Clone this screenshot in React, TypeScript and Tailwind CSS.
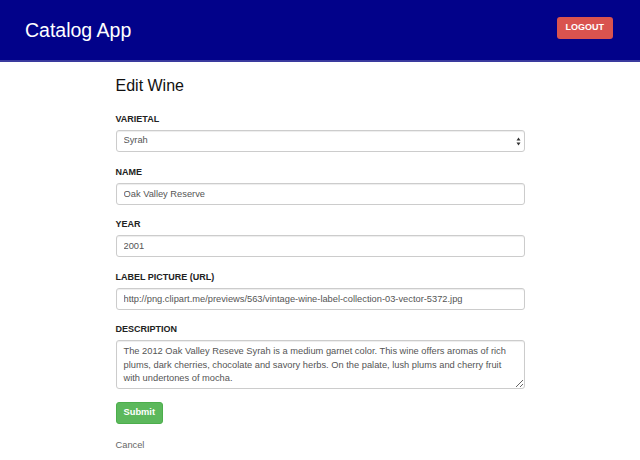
import { useState } from "react";

const labelCls = "block text-[9px] font-bold uppercase text-[#222] mb-[5px] leading-[11px]";
const inputCls =
  "block w-full h-[22px] rounded-[3px] border border-[#cccccc] bg-white px-[7px] text-[9.3px] text-[#555] shadow-[inset_0_1px_1px_rgba(0,0,0,0.075)] outline-none";

export default function App() {
  const [wine, setWine] = useState({
    varietal: "Syrah",
    name: "Oak Valley Reserve",
    year: "2001",
    picture: "http://png.clipart.me/previews/563/vintage-wine-label-collection-03-vector-5372.jpg",
    description:
      "The 2012 Oak Valley Reseve Syrah is a medium garnet color. This wine offers aromas of rich plums, dark cherries, chocolate and savory herbs. On the palate, lush plums and cherry fruit with undertones of mocha.",
  });

  return (
    <div className="min-h-[460px] bg-white font-['Liberation_Sans',Arial,sans-serif]">
      {/* nav bar */}
      <header className="h-[62px] bg-[#02028a] border-b-2 border-[#3a3a9e] flex items-center justify-between pl-[25px] pr-[27px]">
        <span className="text-white text-[19.5px] leading-none mt-[1px]">Catalog App</span>
        <button className="h-[22px] px-[9px] rounded-[3px] bg-[#d9534f] text-white text-[9px] font-bold -mt-[4px]">
          LOGOUT
        </button>
      </header>

      <form className="w-[409px] mx-auto pt-[14px]" onSubmit={(e) => e.preventDefault()}>
        <h3 className="text-[16px] text-[#111] leading-[20px] mb-[18px]">Edit Wine</h3>

        <div className="mb-[14.5px]">
          <label className={labelCls}>Varietal</label>
          <div className="relative">
            <select
              value={wine.varietal}
              onChange={(e) => setWine((p) => ({ ...p, varietal: e.target.value }))}
              className={inputCls + " appearance-none pr-5"}
            >
              <option>Syrah</option>
              <option>Merlot</option>
              <option>Cabernet Sauvignon</option>
            </select>
            <svg className="absolute right-[4px] top-[7px] pointer-events-none" width="5" height="9" viewBox="0 0 5 9">
              <path d="M2.5 0.5L4.5 3.5H0.5Z M2.5 8.5L4.5 5.5H0.5Z" fill="#333" />
            </svg>
          </div>
        </div>

        <div className="mb-[14.5px]">
          <label className={labelCls}>Name</label>
          <input
            type="text"
            value={wine.name}
            onChange={(e) => setWine((p) => ({ ...p, name: e.target.value }))}
            className={inputCls}
          />
        </div>

        <div className="mb-[14.5px]">
          <label className={labelCls}>Year</label>
          <input
            type="text"
            value={wine.year}
            onChange={(e) => setWine((p) => ({ ...p, year: e.target.value }))}
            className={inputCls}
          />
        </div>

        <div className="mb-[14.5px]">
          <label className={labelCls}>Label Picture (URL)</label>
          <input
            type="text"
            value={wine.picture}
            onChange={(e) => setWine((p) => ({ ...p, picture: e.target.value }))}
            className={inputCls}
          />
        </div>

        <div className="mb-[13px]">
          <label className={labelCls}>Description</label>
          <textarea
            rows={3}
            value={wine.description}
            onChange={(e) => setWine((p) => ({ ...p, description: e.target.value }))}
            className="block w-full h-[49px] rounded-[3px] border border-[#cccccc] bg-white px-[7px] py-[4px] text-[9.3px] leading-[13.5px] text-[#555] shadow-[inset_0_1px_1px_rgba(0,0,0,0.075)] outline-none"
          />
        </div>

        <button
          type="submit"
          className="block h-[22px] px-[7px] rounded-[3px] bg-[#5cb85c] border border-[#4cae4c] text-white text-[9.3px] font-bold"
        >
          Submit
        </button>

        <div className="mt-[13px] leading-[11px]">
          <a href="#" className="text-[9.3px] text-[#666]">Cancel</a>
        </div>
      </form>
    </div>
  );
}
